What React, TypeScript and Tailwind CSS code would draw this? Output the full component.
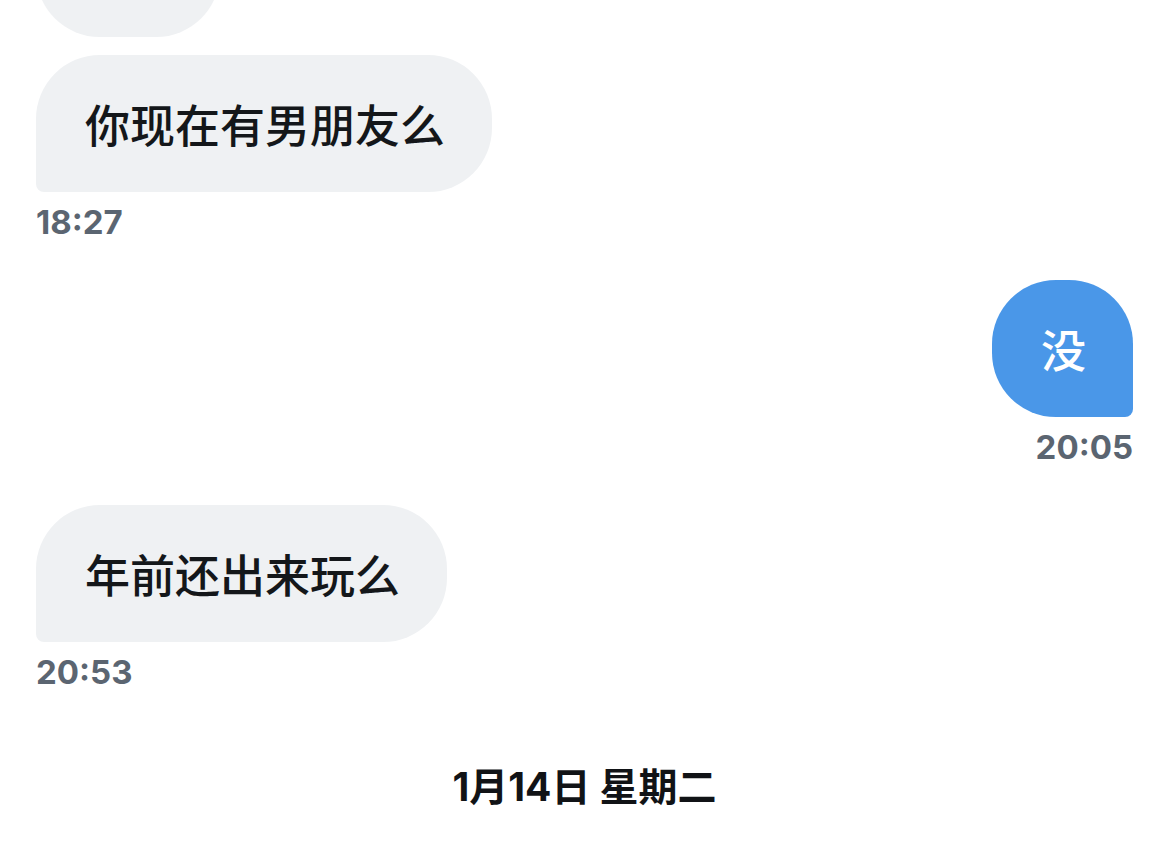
type Message = {
  id: number;
  text: string;
  time?: string;
  mine?: boolean;
};

const MESSAGES: Message[] = [
  { id: 1, text: "你现在有男朋友么", time: "18:27" },
  { id: 2, text: "没", time: "20:05", mine: true },
  { id: 3, text: "年前还出来玩么", time: "20:53" },
];

const CJK = "font-['Noto_Sans_CJK_SC',sans-serif]";
const TIME = "font-['Inter','Noto_Sans_CJK_SC',sans-serif]";

function Bubble({ msg }: { msg: Message }) {
  const shape = msg.mine
    ? "rounded-[64px] rounded-br-[8px] bg-[#4a97e8] text-white"
    : "rounded-[64px] rounded-bl-[8px] bg-[#eff1f3] text-[#14171a]";
  return (
    <div className={msg.mine ? "flex flex-col items-end" : "flex flex-col items-start"}>
      <div className={`flex h-[137px] items-center pl-[49px] pr-[47px] ${shape}`}>
        <span className={`${CJK} text-[45px] font-medium leading-none`}>{msg.text}</span>
      </div>
      {msg.time ? (
        <div className={`${TIME} mt-[10px] text-[33px] font-bold leading-[40px] text-[#5b6571]`}>
          {msg.time}
        </div>
      ) : null}
    </div>
  );
}

export default function App() {
  return (
    <div className="h-[864px] w-full overflow-hidden bg-white px-9">
      <div className="-mt-[100px] flex">
        <div className="h-[137px] w-[184px] rounded-[64px] bg-[#eff1f3]" />
      </div>

      <div className="mt-[18px]">
        <Bubble msg={MESSAGES[0]} />
      </div>
      <div className="mt-[38px]">
        <Bubble msg={MESSAGES[1]} />
      </div>
      <div className="mt-[38px]">
        <Bubble msg={MESSAGES[2]} />
      </div>

      <div
        className={`${TIME} mt-[71px] text-center text-[39px] font-bold leading-[48px] text-[#111316]`}
      >
        1月14日 星期二
      </div>
    </div>
  );
}
